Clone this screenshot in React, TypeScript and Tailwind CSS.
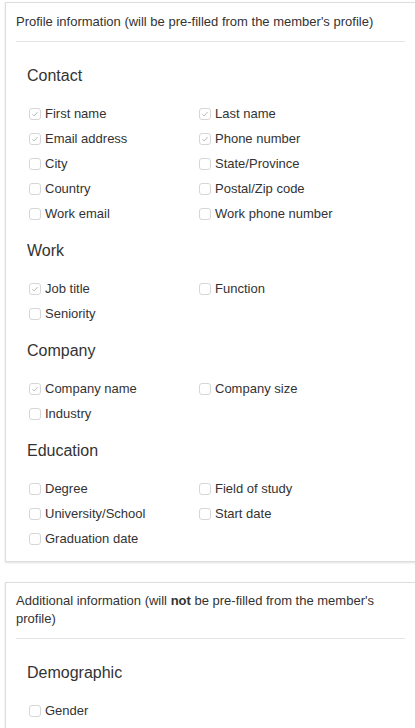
import React from "react";

type Field = { label: string; checked?: boolean };

const sections: { title: string; fields: Field[] }[] = [
  {
    title: "Contact",
    fields: [
      { label: "First name", checked: true },
      { label: "Last name", checked: true },
      { label: "Email address", checked: true },
      { label: "Phone number", checked: true },
      { label: "City" },
      { label: "State/Province" },
      { label: "Country" },
      { label: "Postal/Zip code" },
      { label: "Work email" },
      { label: "Work phone number" },
    ],
  },
  {
    title: "Work",
    fields: [{ label: "Job title", checked: true }, { label: "Function" }, { label: "Seniority" }],
  },
  {
    title: "Company",
    fields: [{ label: "Company name", checked: true }, { label: "Company size" }, { label: "Industry" }],
  },
  {
    title: "Education",
    fields: [
      { label: "Degree" },
      { label: "Field of study" },
      { label: "University/School" },
      { label: "Start date" },
      { label: "Graduation date" },
    ],
  },
];

function Checkbox({ checked }: { checked?: boolean }) {
  return (
    <span className="flex h-[12px] w-[12px] shrink-0 items-center justify-center rounded-[3px] border border-[#d6d6d6] bg-white">
      {checked && (
        <svg viewBox="0 0 10 10" className="h-[8px] w-[8px]">
          <path d="M1.8 5.2 L4 7.4 L8.2 2.6" fill="none" stroke="#b5b5b5" strokeWidth="1.2" />
        </svg>
      )}
    </span>
  );
}

function Section({ title, fields }: { title: string; fields: Field[] }) {
  return (
    <div className="px-[11px]">
      <h3 className="mb-[16px] text-[16px] leading-[18px] text-[#333]">{title}</h3>
      <div className="grid grid-cols-[170px_170px]">
        {fields.map((f) => (
          <label key={f.label} className="flex h-[25px] items-center gap-[4px] pl-[2px] text-[13px] text-[#333]">
            <Checkbox checked={f.checked} />
            <span>{f.label}</span>
          </label>
        ))}
      </div>
    </div>
  );
}

export default function App() {
  return (
    <div className="h-[728px] w-[415px] overflow-hidden bg-white pt-[2px] font-['Liberation_Sans',Arial,sans-serif]">
      <div className="ml-[5px] w-[411px] border border-[#ddd] bg-white px-[10px] pb-[10px] pt-[10px] shadow-[0_1px_2px_rgba(0,0,0,0.12)]">
        <p className="text-[13px] leading-[18px] text-[#333]">
          Profile information (will be pre-filled from the member's profile)
        </p>
        <hr className="mt-[10px] mb-[25px] border-[#e5e5e5]" />
        <div className="flex flex-col gap-[16px]">
          {sections.map((s) => (
            <Section key={s.title} {...s} />
          ))}
        </div>
      </div>

      <div className="ml-[5px] mt-[20px] w-[411px] border border-[#ddd] bg-white px-[10px] pb-[10px] pt-[9px] shadow-[0_1px_2px_rgba(0,0,0,0.12)]">
        <p className="text-[13px] leading-[18px] text-[#333]">
          Additional information (will <span className="font-bold">not</span> be pre-filled from the member's profile)
        </p>
        <hr className="mt-[10px] mb-[25px] border-[#e5e5e5]" />
        <Section title="Demographic" fields={[{ label: "Gender" }]} />
      </div>
    </div>
  );
}
